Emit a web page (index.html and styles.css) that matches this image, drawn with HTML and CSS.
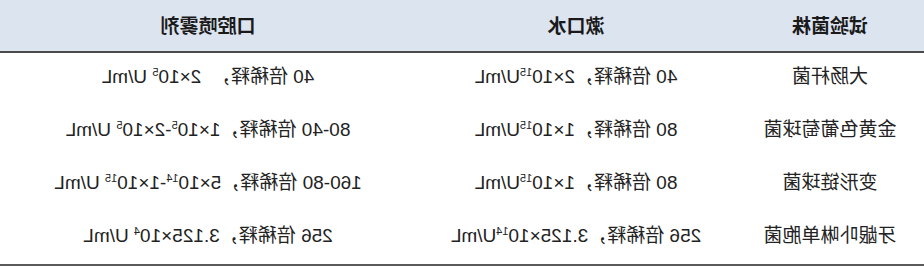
FILE: index.html
```html
<!DOCTYPE html>
<html lang="zh-CN">
<head>
<meta charset="utf-8">
<link rel="stylesheet" href="styles.css">
</head>
<body>
<div class="mirror">
  <table class="grid">
    <colgroup>
      <col class="c1"><col class="c2"><col class="c3">
    </colgroup>
    <thead>
      <tr><th>试验菌株</th><th>漱口水</th><th>口腔喷雾剂</th></tr>
    </thead>
    <tbody>
      <tr>
        <td>大肠杆菌</td>
        <td>40 倍稀释，2×10<sup>15</sup>U/mL</td>
        <td>40 倍稀释，&nbsp; 2×10<sup>5</sup> U/mL</td>
      </tr>
      <tr>
        <td>金黄色葡萄球菌</td>
        <td>80 倍稀释，1×10<sup>15</sup>U/mL</td>
        <td>80-40 倍稀释，1×10<sup>5</sup>-2×10<sup>5</sup> U/mL</td>
      </tr>
      <tr>
        <td>变形链球菌</td>
        <td>80 倍稀释，1×10<sup>15</sup>U/mL</td>
        <td>160-80 倍稀释，5×10<sup>14</sup>-1×10<sup>15</sup> U/mL</td>
      </tr>
      <tr>
        <td>牙龈卟啉单胞菌</td>
        <td>256 倍稀释，3.125×10<sup>14</sup>U/mL</td>
        <td>256 倍稀释，3.125×10<sup>4</sup> U/mL</td>
      </tr>
    </tbody>
  </table>
</div>
</body>
</html>
```

FILE: styles.css
```css
html, body {
  margin: 0;
  padding: 0;
  background: #ffffff;
}

.mirror {
  width: 924px;
  transform: scaleX(-1);
}

.grid {
  width: 924px;
  border-collapse: collapse;
  table-layout: fixed;
  font-family: "Liberation Sans", "Noto Sans CJK SC", sans-serif;
  font-size: 19px;
  color: #222222;
  border-bottom: 2px solid #5a5a5a;
  box-shadow: 0 1px 0 #c8c8c8;
}

.c1 { width: 188px; }
.c2 { width: 320px; }
.c3 { width: 416px; }

.grid th {
  height: 49px;
  padding: 0 0 2px;
  background: #dce4f0;
  font-weight: 700;
  color: #1a1a1a;
  text-align: center;
  border-bottom: 2px solid #4a4a4a;
}

.grid td {
  height: 47px;
  padding: 0 0 6px;
  text-align: center;
  white-space: nowrap;
  line-height: 20px;
}

.grid tbody tr:last-child td {
  height: 48px;
  padding: 0 0 4px;
}

.grid sup {
  font-size: 11px;
  line-height: 0;
  vertical-align: 7px;
}
```
